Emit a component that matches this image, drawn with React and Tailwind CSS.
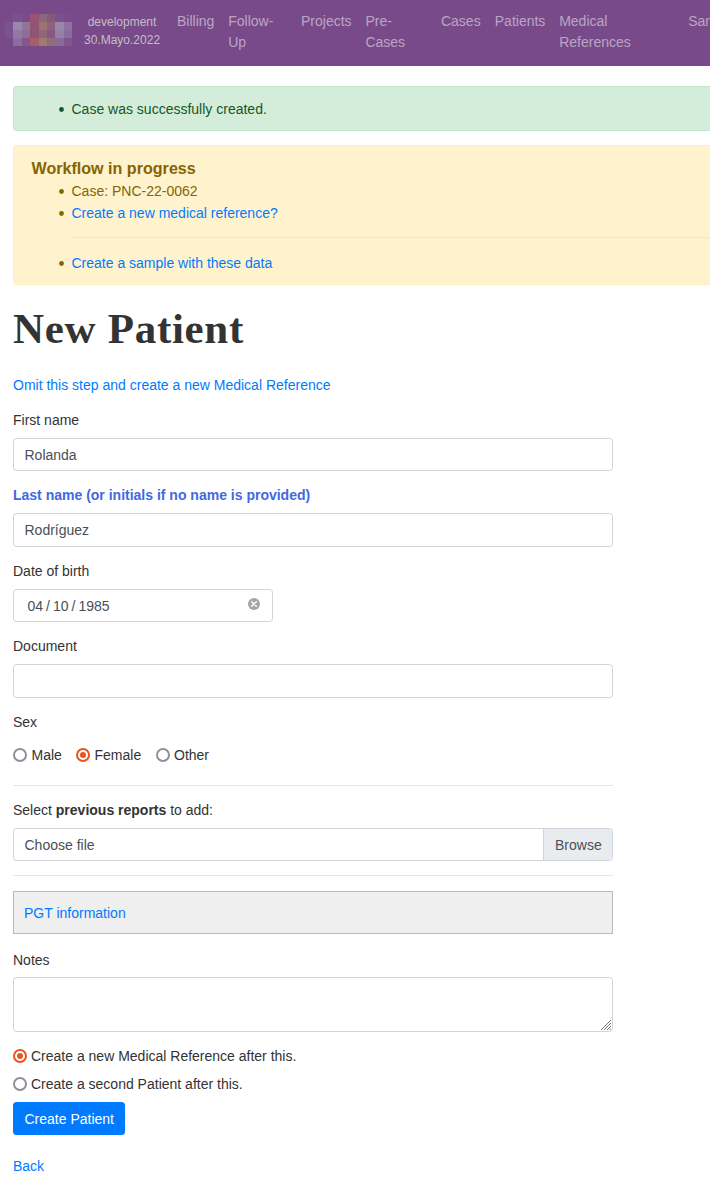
import React from 'react';

const LOGO = [
  ['#784a89', '#7b5090', '#7a4a89', '#985374', '#89677c', '#845a7b', '#7c4f8e', '#7a4c8b'],
  ['#7c518f', '#9a86ac', '#92749b', '#965370', '#9d7273', '#90637a', '#9a85ac', '#8e719f'],
  ['#7c518f', '#9278a3', '#8d6e98', '#925475', '#91667a', '#895881', '#9680a8', '#8c6c9e'],
  ['#784a89', '#8d6ca0', '#87548c', '#a45e69', '#9c7e6e', '#906e78', '#8a6a9e', '#80558f'],
];

const inputBox =
  'block h-[33.5px] w-full rounded-[3.5px] border border-[#ced4da] bg-white px-[10.5px] text-[14px] leading-[21px] text-[#495057] outline-none';

function Field({ label, value, strong }) {
  return (
    <div className="mb-[14.2px]">
      <label
        className={
          strong
            ? 'mb-[6.8px] block font-bold text-[#4169e1]'
            : 'mb-[6.8px] block'
        }
      >
        {label}
      </label>
      <input type="text" className={inputBox} defaultValue={value} />
    </div>
  );
}

function Radio({ on }) {
  return (
    <svg className="mb-px size-3.5 shrink-0" viewBox="0 0 14 14">
      <circle cx="7" cy="7" r="6" fill="#fff" stroke={on ? '#e9541f' : '#8f8f9d'} strokeWidth="2" />
      {on && <circle cx="7" cy="7" r="3" fill="#e9541f" />}
    </svg>
  );
}

function Bullet({ children }) {
  return (
    <li className="flex h-[22px] items-center leading-[22px]">
      <svg className="mt-px mr-[7.5px] -ml-[12.5px] size-[5px] shrink-0" viewBox="0 0 5 5">
        <circle cx="2.5" cy="2.5" r="2.4" fill="currentColor" />
      </svg>
      {children}
    </li>
  );
}

function NavItem({ className, children }) {
  return <a className={`shrink-0 ${className}`}>{children}</a>;
}

export default function App() {
  return (
    <div className="h-[1181px] w-[710px] overflow-hidden bg-white font-['Liberation_Sans',Arial,sans-serif] text-[14px] leading-[21px] text-[#333]">
      <nav className="flex h-[66px] items-start bg-[#784a89] text-white/50">
        <div className="ml-[5px] mt-3.5 grid h-8 w-[67px] shrink-0 grid-cols-[8px_9px_8px_9px_8px_8px_9px_8px] grid-rows-4">
          {LOGO.flat().map((c, i) => (
            <span key={i} style={{ backgroundColor: c }} />
          ))}
        </div>
        <div className="ml-3 mt-[13px] w-[76px] shrink-0 text-center text-[12px] leading-[18px] text-[#c3bfc4]">
          development
          <br />
          30.Mayo.2022
        </div>
        <div className="ml-[17px] flex shrink-0 pt-[11px]">
          <NavItem className="w-[51.2px]">Billing</NavItem>
          <NavItem className="w-[72.8px]">Follow-<br />Up</NavItem>
          <NavItem className="w-[64.4px]">Projects</NavItem>
          <NavItem className="w-[75.6px]">Pre-<br />Cases</NavItem>
          <NavItem className="w-[53.8px]">Cases</NavItem>
          <NavItem className="w-[64.4px]">Patients</NavItem>
          <NavItem className="w-[129px]">Medical<br />References</NavItem>
          <NavItem className="w-[60px]">Samples</NavItem>
        </div>
      </nav>

      <main className="pl-[13px] pt-5">
        <div className="h-[45px] w-[760px] rounded-[3.5px] border border-[#c3e6cb] bg-[#d4edda] pt-[11px] pl-[57.5px] text-[#155724]">
          <ul>
            <Bullet>Case was successfully created.</Bullet>
          </ul>
        </div>

        <div className="mt-3.5 h-[140px] w-[760px] rounded-[3.5px] border border-[#ffeeba] bg-[#fff3cd] pt-3 pl-[17.5px] text-[#856404]">
          <h4 className="h-[22px] text-[16.1px] leading-[20px] font-bold">Workflow in progress</h4>
          <ul className="pl-10">
            <Bullet>Case: PNC-22-0062</Bullet>
            <Bullet>
              <a className="text-[#007bff]">Create a new medical reference?</a>
            </Bullet>
            <hr className="mt-[13px] mb-3.5 border-t border-[#ffe8a1]" />
            <Bullet>
              <a className="text-[#007bff]">Create a sample with these data</a>
            </Bullet>
          </ul>
        </div>

        <h1 className="mt-[19px] h-[50px] font-['Liberation_Serif',serif] text-[43px] leading-[50px] font-bold tracking-[0.7px] whitespace-nowrap">
          New Patient
        </h1>
        <a className="mt-[21px] block text-[#007bff]">Omit this step and create a new Medical Reference</a>

        <form className="mt-3.5 w-[600px]">
          <Field label="First name" value="Rolanda" />
          <Field label="Last name (or initials if no name is provided)" value="Rodríguez" strong />
          <div className="mb-[14.2px]">
            <label className="mb-[6.8px] block">Date of birth</label>
            <div className="flex h-[33.5px] w-[260px] items-center justify-between rounded-[3.5px] border border-[#ced4da] pr-3 pl-[13.5px] text-[#495057]">
              <span className="flex gap-[3px] pt-px">
                <span>04</span>
                <span>/</span>
                <span>10</span>
                <span>/</span>
                <span>1985</span>
              </span>
              <svg className="mb-[3.5px] size-3" viewBox="0 0 12 12">
                <circle cx="6" cy="6" r="6" fill="#a2a5aa" />
                <path d="M3.7 3.7l4.6 4.6M8.3 3.7L3.7 8.3" stroke="#fff" strokeWidth="1.5" strokeLinecap="round" />
              </svg>
            </div>
          </div>
          <Field label="Document" value="" />

          <div>Sex</div>
          <div className="mt-3 flex items-center">
            <Radio />
            <span className="ml-[4.5px] w-[44.5px]">Male</span>
            <Radio on />
            <span className="ml-[4.5px] w-[61.5px]">Female</span>
            <Radio />
            <span className="ml-1">Other</span>
          </div>

          <hr className="mt-[19px] border-t border-[#e5e5e5]" />
          <div className="mt-3.5">
            Select <strong>previous reports</strong> to add:
          </div>
          <div className="mt-[7px] flex h-[33px] overflow-hidden rounded-[3.5px] border border-[#ced4da] text-[#495057]">
            <span className="flex-1 pt-[6px] pl-[10.5px]">Choose file</span>
            <span className="w-[69px] border-l border-[#ced4da] bg-[#e9ecef] pt-[6px] pl-[11px]">Browse</span>
          </div>
          <hr className="mt-3.5 border-t border-[#e5e5e5]" />

          <div className="mt-[15px] flex h-[43px] items-center border border-[#bbb] bg-[#efefef] pt-0.5 pl-[10px]">
            <a className="text-[#007bff]">PGT information</a>
          </div>

          <label className="mt-4 block">Notes</label>
          <div className="relative mt-1.5 h-[55px]">
            <textarea className="block h-[55px] w-full resize-none rounded-[3.5px] border border-[#ced4da] outline-none" />
            <svg className="absolute right-[2px] bottom-[2px] size-2.5" viewBox="0 0 10 10">
              <path d="M0 10L10 0M3 10L10 3M6 10L10 6M8.5 10L10 8.5" stroke="#777" strokeWidth="1" />
            </svg>
          </div>

          <div className="mt-3.5 flex items-center gap-1">
            <Radio on />
            <span>Create a new Medical Reference after this.</span>
          </div>
          <div className="mt-[7px] flex items-center gap-1">
            <Radio />
            <span>Create a second Patient after this.</span>
          </div>
          <button type="button" className="mt-[7px] block h-[33px] w-28 rounded-[3.5px] bg-[#007bff] pt-0.5 pl-[0.5px] text-white">
            Create Patient
          </button>
        </form>
        <a className="mt-[21px] block text-[#007bff]">Back</a>
      </main>
    </div>
  );
}
